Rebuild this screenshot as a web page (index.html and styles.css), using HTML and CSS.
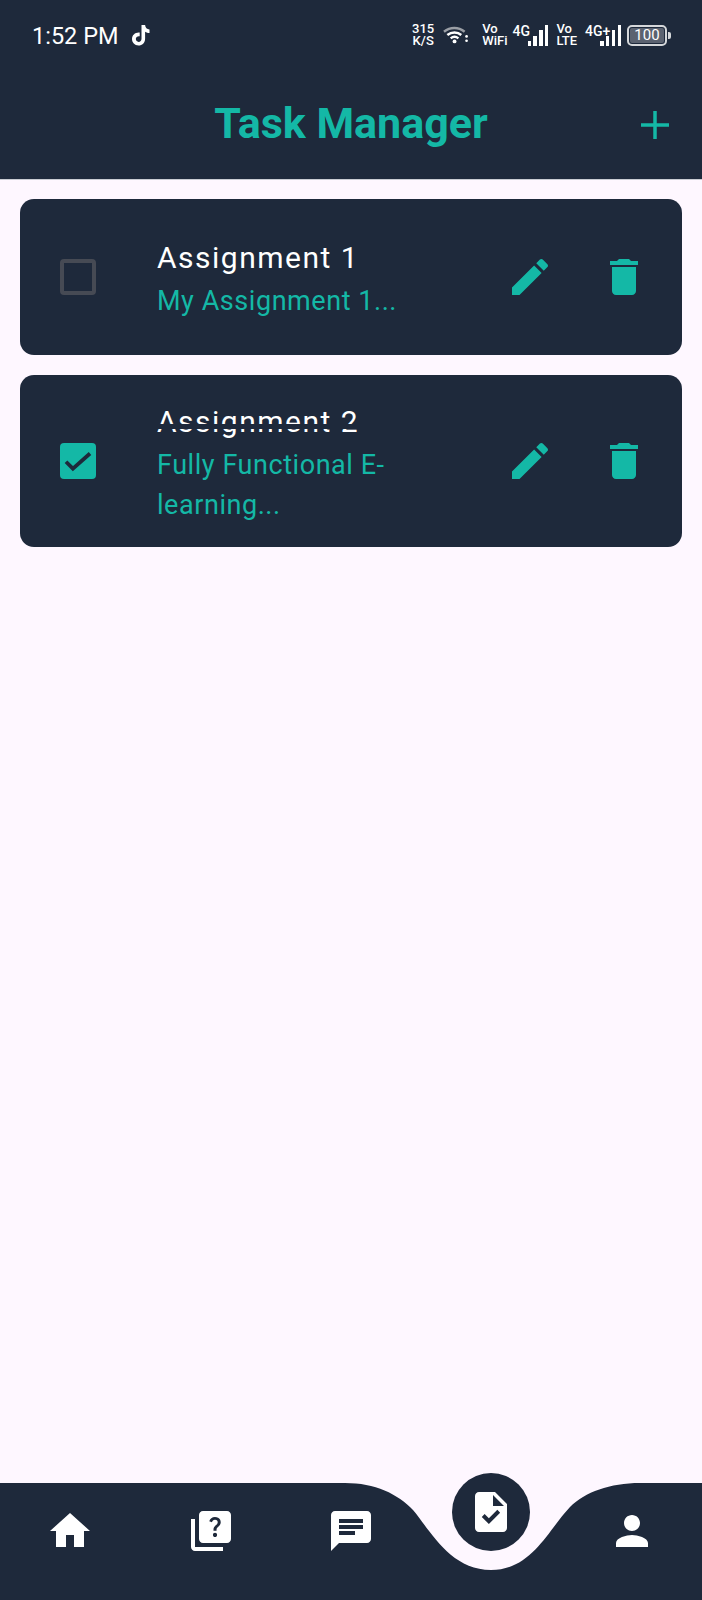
FILE: index.html
```html
<!DOCTYPE html>
<html lang="en">
<head>
  <meta charset="UTF-8" />
  <title>Task Manager</title>
  <meta name="viewport" content="width=device-width, initial-scale=1.0" />
  <link rel="stylesheet" href="styles.css">
</head>
<body>

  <!-- Header -->
  <header class="top">
    <div class="status-bar">
      <span class="time">1:52 PM</span>
      <svg class="tiktok" viewBox="0 0 24 24"><path fill="#fff" d="M12.5 2h3.6c.2 2.6 1.8 4.3 4.4 4.5v3.6c-1.600 0-3.100-.5-4.400-1.300v6.900c0 4-3 6.800-6.600 6.800-3.800 0-6.500-3-6.500-6.500 0-4 3.300-7 7.700-6.500v3.800c-2.200-.4-3.900 1-3.900 2.800 0 1.600 1.300 2.800 2.800 2.800 1.700 0 2.900-1.200 2.900-3.100z"/></svg>
      <div class="status-right">
        <div class="stack speed"><b>315</b><b>K/S</b></div>
        <svg class="wifi" viewBox="0 0 26 18">
          <path d="M1 5.500C7.500 .5 16 .5 22.500 5.500" fill="none" stroke="#9a9ea5" stroke-width="2.600"/>
          <path d="M4.500 9C9 5.500 15 5.500 19 9" fill="none" stroke="#fff" stroke-width="2.600"/>
          <path d="M8 12.500c2.500-2 5.500-2 8 0" fill="none" stroke="#fff" stroke-width="2.600"/>
          <circle cx="12" cy="15.700" r="2" fill="#fff"/>
          <circle cx="24.500" cy="10.500" r="1.400" fill="#fff"/>
          <circle cx="24.500" cy="15" r="1.400" fill="#fff"/>
        </svg>
        <div class="stack vo"><b>Vo</b><b>WiFi</b></div>
        <div class="signal signal-first">
          <span class="net">4G</span>
          <i class="b1"></i><i class="b2"></i><i class="b3"></i><i class="b4"></i>
        </div>
        <div class="stack vo"><b>Vo</b><b>LTE</b></div>
        <div class="signal">
          <span class="net">4G+</span>
          <i class="b1"></i><i class="b2"></i><i class="b3"></i><i class="b4"></i>
        </div>
        <div class="battery"><span class="battery-level">100</span></div>
        <span class="battery-tip"></span>
      </div>
    </div>
    <div class="app-bar">
      <h1>Task Manager</h1>
      <svg class="add" viewBox="0 0 30 30"><path d="M15 1v28M1 15h28" stroke="#14b8a6" stroke-width="3.500" fill="none"/></svg>
    </div>
  </header>

  <!-- Tasks -->
  <main class="tasks">
    <div class="task task-one">
      <span class="check"></span>
      <div class="task-text">
        <div class="task-title">Assignment 1</div>
        <div class="task-desc">My Assignment 1...</div>
      </div>
      <svg class="action edit" viewBox="0 0 24 24"><path d="M3 17.250V21h3.750L17.810 9.940l-3.750-3.750L3 17.250zM20.710 7.040c.39-.39.39-1.020 0-1.410l-2.340-2.340c-.39-.39-1.020-.39-1.410 0l-1.830 1.830 3.750 3.750 1.830-1.830z"/></svg>
      <svg class="action trash" viewBox="0 0 24 24"><path d="M6 19c0 1.100.9 2 2 2h8c1.100 0 2-.9 2-2V7H6v12zM19 4h-3.500l-1-1h-5l-1 1H5v2h14V4z"/></svg>
    </div>

    <div class="task task-two">
      <span class="check checked">
        <svg viewBox="0 0 24 24"><path d="M4 12.500l4.600 4.600L20 7" fill="none" stroke="#1e293b" stroke-width="2.500"/></svg>
      </span>
      <div class="task-text">
        <div class="task-title done">Assignment 2</div>
        <div class="task-desc">Fully Functional E-<br>learning...</div>
      </div>
      <svg class="action edit" viewBox="0 0 24 24"><path d="M3 17.250V21h3.750L17.810 9.940l-3.750-3.750L3 17.250zM20.710 7.040c.39-.39.39-1.020 0-1.410l-2.340-2.340c-.39-.39-1.020-.39-1.410 0l-1.830 1.830 3.750 3.750 1.830-1.830z"/></svg>
      <svg class="action trash" viewBox="0 0 24 24"><path d="M6 19c0 1.100.9 2 2 2h8c1.100 0 2-.9 2-2V7H6v12zM19 4h-3.500l-1-1h-5l-1 1H5v2h14V4z"/></svg>
    </div>
  </main>

  <!-- Bottom nav -->
  <nav class="bottom-nav">
    <svg class="nav-bg" viewBox="0 0 702 130" preserveAspectRatio="none">
      <path fill="#1e293b" d="M0 13H345C375 13 398 24 413 40C430 60 450 100 491 100C532 100 548 60 570 37C585 22 610 13 640 13H702V130H0Z"/>
    </svg>
    <div class="nav-item">
      <svg viewBox="0 0 24 24"><path d="M10 20v-6h4v6h5v-8h3L12 3 2 12h3v8z"/></svg>
    </div>
    <div class="nav-item">
      <svg viewBox="0 0 24 24"><path d="M4 6H2v14c0 1.100.9 2 2 2h14v-2H4V6zm16-4H8c-1.100 0-2 .9-2 2v12c0 1.100.9 2 2 2h12c1.100 0 2-.9 2-2V4c0-1.100-.9-2-2-2zm-5.990 13c-.59 0-1.050-.47-1.050-1.050 0-.59.47-1.040 1.050-1.040.59 0 1.040.45 1.040 1.040-.01.58-.45 1.050-1.040 1.050zm2.500-6.170c-.63.93-1.230 1.210-1.560 1.810-.13.24-.18.4-.18 1.180h-1.520c0-.41-.06-1.080.26-1.650.41-.73 1.180-1.160 1.630-1.800.48-.68.21-1.950-1.140-1.950-.88 0-1.320.67-1.500 1.230l-1.370-.57C11.510 5.960 12.520 5 13.990 5c1.230 0 2.080.56 2.510 1.260.37.61.58 1.730.01 2.570z"/></svg>
    </div>
    <div class="nav-item">
      <svg viewBox="0 0 24 24"><path d="M20 2H4c-1.100 0-1.990.9-1.990 2L2 22l4-4h14c1.100 0 2-.9 2-2V4c0-1.100-.9-2-2-2zM14 14H6v-2h8v2zm4-3H6V9h12v2zm0-3H6V6h12v2z"/></svg>
    </div>
    <div class="nav-item nav-active">
      <span class="nav-circle">
        <svg viewBox="0 0 24 24"><path d="M14 2H6c-1.100 0-2 .9-2 2v16c0 1.100.9 2 2 2h12c1.100 0 2-.9 2-2V8l-6-6zm-3.060 16L7.400 14.460l1.410-1.410 2.120 2.120 4.240-4.240 1.410 1.410L10.940 18zM13 9V3.500L18.500 9H13z"/></svg>
      </span>
    </div>
    <div class="nav-item">
      <svg viewBox="0 0 24 24"><path d="M12 12c2.210 0 4-1.790 4-4s-1.790-4-4-4-4 1.790-4 4 1.790 4 4 4zm0 2c-2.670 0-8 1.340-8 4v2h16v-2c0-2.660-5.330-4-8-4z"/></svg>
    </div>
  </nav>

</body>
</html>
```

FILE: styles.css
```css
* {
  box-sizing: border-box;
}

html,
body {
  height: 100%;
}

body {
  margin: 0;
  background-color: #fef7ff;
  font-family: Roboto, Arial, sans-serif;
  display: flex;
  flex-direction: column;
  overflow: hidden;
}

/* Header */
.top {
  background-color: #1e293b;
  height: 180px;
  border-bottom: 1px solid #c9ccd2;
  flex-shrink: 0;
}

.status-bar {
  height: 70px;
  display: flex;
  align-items: center;
  padding: 0 31px 0 32px;
  color: #fff;
}

.time {
  font-size: 23.500px;
  padding-top: 2px;
}

.tiktok {
  width: 24px;
  height: 24px;
  margin-left: 11px;
}

.status-right {
  margin-left: auto;
  display: flex;
  align-items: center;
  gap: 8px;
}

.stack {
  display: flex;
  flex-direction: column;
  font-size: 13px;
  line-height: 12px;
}

.stack b {
  font-weight: 500;
}

.speed {
  align-items: center;
  margin-right: 1px;
}

.wifi {
  width: 25px;
  height: 18px;
  margin-right: 6px;
}

.signal {
  position: relative;
  display: flex;
  align-items: flex-end;
  gap: 2.300px;
  height: 21px;
  padding-left: 15px;
}

.signal-first {
  margin-left: -3px;
}

.signal .net {
  position: absolute;
  left: 0;
  top: -1px;
  font-size: 14px;
  font-weight: 500;
  line-height: 14px;
}

.signal i {
  width: 3.500px;
  background: #fff;
}

.b1 { height: 5px; }
.b2 { height: 10px; }
.b3 { height: 16px; }
.b4 { height: 21px; }

.battery {
  width: 40px;
  height: 21px;
  border: 2px solid #d5d7da;
  border-radius: 5px;
  padding: 1px;
  display: flex;
  margin-left: -2px;
}

.battery-level {
  flex: 1;
  background: #5b6270;
  border-radius: 2px;
  font-size: 15px;
  line-height: 15px;
  text-align: center;
}

.battery-tip {
  width: 3px;
  height: 7px;
  background: #d5d7da;
  border-radius: 0 2px 2px 0;
  margin-left: -7px;
}

.app-bar {
  position: relative;
  height: 109px;
  display: flex;
  align-items: center;
  justify-content: center;
  padding-bottom: 4px;
}

.app-bar h1 {
  margin: 0;
  color: #14b8a6;
  font-size: 43px;
  font-weight: 700;
}

.add {
  position: absolute;
  right: 32px;
  top: 40px;
  width: 30px;
  height: 30px;
}

/* Task cards */
.tasks {
  flex: 1;
  padding: 19px 20px;
  display: flex;
  flex-direction: column;
  gap: 20px;
}

.task {
  background-color: #1e293b;
  border-radius: 14px;
  display: flex;
  align-items: center;
  padding: 0 34px 0 40px;
}

.task-one {
  height: 156px;
}

.task-two {
  height: 172px;
}

.check {
  width: 36px;
  height: 36px;
  border: 4px solid #464a54;
  border-radius: 4px;
  flex-shrink: 0;
}

.check.checked {
  background: #14b8a6;
  border: none;
  display: flex;
}

.task-text {
  flex: 1;
  margin-left: 61px;
}

.task-title {
  color: #fff;
  font-size: 30px;
  letter-spacing: 1.500px;
  line-height: 47px;
}

/* strike is drawn in the card colour, so it cuts through the letters */
.task-title.done {
  position: relative;
}

.task-title.done::after {
  content: "";
  position: absolute;
  left: 0;
  right: 0;
  top: 26px;
  height: 5px;
  background: #1e293b;
}

.task-desc {
  color: #14b8a6;
  font-size: 27px;
  letter-spacing: 0.550px;
  line-height: 40px;
}

.action {
  width: 48px;
  height: 48px;
  fill: #14b8a6;
  flex-shrink: 0;
}

.edit {
  margin-right: 46px;
}

/* Bottom nav */
.bottom-nav {
  position: relative;
  height: 130px;
  flex-shrink: 0;
  display: grid;
  grid-template-columns: repeat(5, 1fr);
}

.nav-bg {
  position: absolute;
  left: 0;
  top: 0;
  width: 100%;
  height: 100%;
}

.nav-item {
  position: relative;
  display: flex;
  justify-content: center;
  padding-top: 37px;
}

.nav-item svg {
  width: 48px;
  height: 48px;
  fill: #fff;
}

.nav-circle {
  position: absolute;
  top: 3px;
  left: 31px;
  width: 78px;
  height: 78px;
  border-radius: 50%;
  background: #1e293b;
  display: flex;
  align-items: center;
  justify-content: center;
}
```
